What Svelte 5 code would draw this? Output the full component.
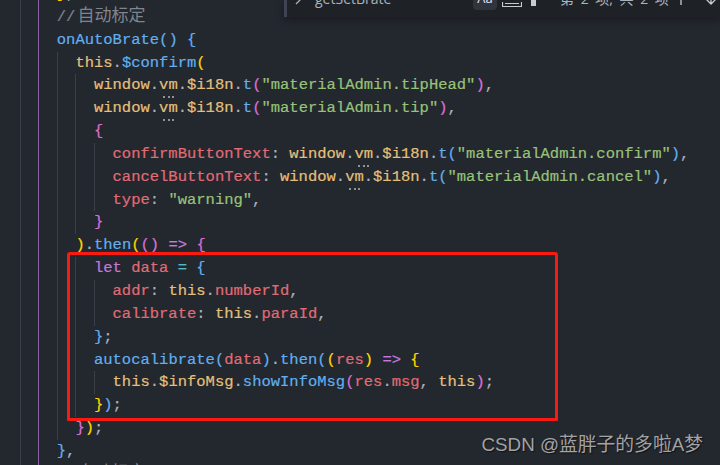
<script>
  // token classes: k keyword, r property, y variable, b function, g string, c comment
  // gold / pk / b double as the bracket colours. v is "vm" with the hint dots under it
  const win = [['y', 'window'], ['w', '.'], ['v', 'vm'], ['w', '.'], ['y', '$i18n'], ['w', '.'], ['b', 't']];
  const comment = [['c', '//'], ['cj', '自动标定']];
  const lines = [
    { i: 3, t: [['gold', '}'], ['w', ',']] },
    { i: 3, t: comment },
    { i: 3, t: [['b', 'onAutoBrate'], ['b', '()'], ['w', ' '], ['b', '{']] },
    { i: 4, t: [['y', 'this'], ['w', '.'], ['b', '$confirm'], ['gold', '(']] },
    { i: 5, t: [...win, ['pk', '('], ['g', '"materialAdmin.tipHead"'], ['pk', ')'], ['w', ',']] },
    { i: 5, t: [...win, ['pk', '('], ['g', '"materialAdmin.tip"'], ['pk', ')'], ['w', ',']] },
    { i: 5, t: [['pk', '{']] },
    { i: 6, t: [['r', 'confirmButtonText'], ['w', ': '], ...win, ['b', '('], ['g', '"materialAdmin.confirm"'], ['b', ')'], ['w', ',']] },
    { i: 6, t: [['r', 'cancelButtonText'], ['w', ': '], ...win, ['b', '('], ['g', '"materialAdmin.cancel"'], ['b', ')'], ['w', ',']] },
    { i: 6, t: [['r', 'type'], ['w', ': '], ['g', '"warning"'], ['w', ',']] },
    { i: 5, t: [['pk', '}']] },
    { i: 4, t: [['gold', ')'], ['w', '.'], ['b', 'then'], ['gold', '('], ['pk', '()'], ['w', ' '], ['k', '=>'], ['w', ' '], ['pk', '{']] },
    { i: 5, t: [['k', 'let'], ['w', ' '], ['r', 'data'], ['w', ' '], ['cy', '='], ['w', ' '], ['b', '{']] },
    { i: 6, t: [['r', 'addr'], ['w', ': '], ['y', 'this'], ['w', '.'], ['r', 'numberId'], ['w', ',']] },
    { i: 6, t: [['r', 'calibrate'], ['w', ': '], ['y', 'this'], ['w', '.'], ['r', 'paraId'], ['w', ',']] },
    { i: 5, t: [['b', '}'], ['w', ';']] },
    { i: 5, t: [['b', 'autocalibrate'], ['b', '('], ['r', 'data'], ['b', ')'], ['w', '.'], ['b', 'then'], ['b', '('], ['gold', '('], ['r', 'res'], ['gold', ')'], ['w', ' '], ['k', '=>'], ['w', ' '], ['gold', '{']] },
    { i: 6, t: [['y', 'this'], ['w', '.'], ['y', '$infoMsg'], ['w', '.'], ['b', 'showInfoMsg'], ['pk', '('], ['r', 'res'], ['w', '.'], ['r', 'msg'], ['w', ', '], ['y', 'this'], ['pk', ')'], ['w', ';']] },
    { i: 5, t: [['gold', '}'], ['b', ')'], ['w', ';']] },
    { i: 4, t: [['pk', '}'], ['gold', ')'], ['w', ';']] },
    { i: 3, t: [['b', '}'], ['w', ',']] },
    { i: 3, t: comment }
  ];
  const cols = [1, 2, 3, 4, 5];
</script>

<div class="editor">
  <div class="code">
    {#each lines as line}
      <div class="line">
        <span class="first"></span>
        {#each cols as c}
          {#if c < line.i}
            <span class="indent" class:purple={c === 2}></span>
          {/if}
        {/each}
        {#each line.t as [cls, txt]}<span class={cls}>{txt}</span>{/each}
      </div>
    {/each}
  </div>

  <div class="find">
    <div class="row">
      <svg class="chev" width="10" height="24" viewBox="0 0 10 24"><path d="M2 6l6 6-6 6" fill="none" stroke="#abb2bf" stroke-width="1.3"/></svg>
      <span class="query">getSetBrate</span>
      <span class="opt on">Aa</span>
      <svg class="icon word" width="20" height="24" viewBox="0 0 20 24"><path d="M0.5 16v4.5h19V16" fill="none" stroke="#c8ccd2" stroke-width="1.2"/><path d="M3 17.5h14" stroke="#c8ccd2" stroke-width="1"/></svg>
      <svg class="icon re" width="6" height="24" viewBox="0 0 6 24"><rect x="0" y="12" width="5" height="8" fill="#c8ccd2"/></svg>
      <span class="count">第 2 项, 共 2 项</span>
      <svg class="icon up" width="10" height="24" viewBox="0 0 10 24"><path d="M5 19V4" stroke="#c8ccd2" stroke-width="1.3"/></svg>
      <svg class="icon down" width="14" height="24" viewBox="0 0 14 24"><path d="M7 6v11M2 13l5 5 5-5" fill="none" stroke="#c8ccd2" stroke-width="1.3"/></svg>
    </div>
  </div>

  <div class="mark"></div>
  <div class="wm">CSDN @蓝胖子的多啦A梦</div>
</div>

<style>
  :global(body) {
    margin: 0;
    background: #23272e;
  }

  .editor {
    position: relative;
    width: 720px;
    height: 465px;
    overflow: hidden;
    background: #23272e;
  }

  .code {
    margin-top: -17px;
    padding-left: 1px;
    font-family: "Liberation Mono", "Noto Sans CJK SC", monospace;
    font-size: 15.5px;
    -webkit-text-stroke: 0.2px;
  }

  .line {
    display: flex;
    height: 22.85px;
    line-height: 22.85px;
    white-space: pre;
    color: #abb2bf;
  }

  .first {
    flex: none;
    width: 18.6px;
  }

  .indent {
    flex: none;
    box-sizing: border-box;
    width: 18.6px;
    height: 100%;
    border-left: 1px solid #3b4048;
  }

  .indent.purple {
    border-left-color: #8f5fa3;
  }

  .w { color: #abb2bf; }
  .c { color: #7f848e; }
  .k { color: #c678dd; }
  .r { color: #e06c75; }
  .y { color: #e5c07b; }
  .b { color: #61afef; }
  .g { color: #98c379; }
  .cy { color: #56b6c2; }
  .gold { color: #ffd700; }
  .pk { color: #da70d6; }

  .cj {
    margin-left: 2px;
    font-size: 17px;
    color: #7f848e;
    -webkit-text-stroke: 0;
  }

  .v {
    position: relative;
    color: #e5c07b;
  }

  .v::after {
    content: "";
    position: absolute;
    left: 4px;
    bottom: -1px;
    width: 11px;
    border-bottom: 2px dotted #8d929b;
  }

  .find {
    position: absolute;
    top: 0;
    left: 284px;
    right: 0;
    height: 17px;
    background: #1e2227;
    border-left: 3px solid #3e4452;
    box-shadow: 0 2px 8px rgba(0, 0, 0, 0.35);
    overflow: hidden;
    font-family: "Open Sans", "Noto Sans CJK SC", sans-serif;
    font-size: 14px;
    color: #abb2bf;
  }

  .row {
    display: flex;
    align-items: center;
    height: 24px;
    margin-top: -14px;
    white-space: nowrap;
  }

  .chev {
    margin-left: 7px;
    flex: none;
  }

  .query {
    width: 158px;
    margin-left: 11px;
    flex: none;
  }

  .opt {
    width: 24px;
    flex: none;
    text-align: center;
    font-size: 13px;
    color: #e6e9ee;
  }

  .on {
    background: #2f343d;
    line-height: 24px;
    border-radius: 4px;
  }

  .icon { flex: none; }
  .word { margin-left: 5px; }
  .re { margin-left: 9px; }

  .count {
    flex: none;
    width: 113px;
    margin-left: 23px;
    word-spacing: 3px;
  }

  .up { margin-left: 3px; }
  .down { margin-left: 18px; }

  .mark {
    position: absolute;
    left: 67px;
    top: 252px;
    width: 491px;
    height: 169px;
    box-sizing: border-box;
    border: 3px solid #fb1a12;
    border-radius: 3px 3px 1px 1px;
  }

  .wm {
    position: absolute;
    right: 17px;
    top: 433px;
    font-family: "Liberation Sans", "Noto Sans CJK SC", sans-serif;
    font-size: 18.8px;
    line-height: 24px;
    color: #a3a3a3;
    text-shadow: 1px 1px 1px rgba(0, 0, 0, 0.55);
  }
</style>
